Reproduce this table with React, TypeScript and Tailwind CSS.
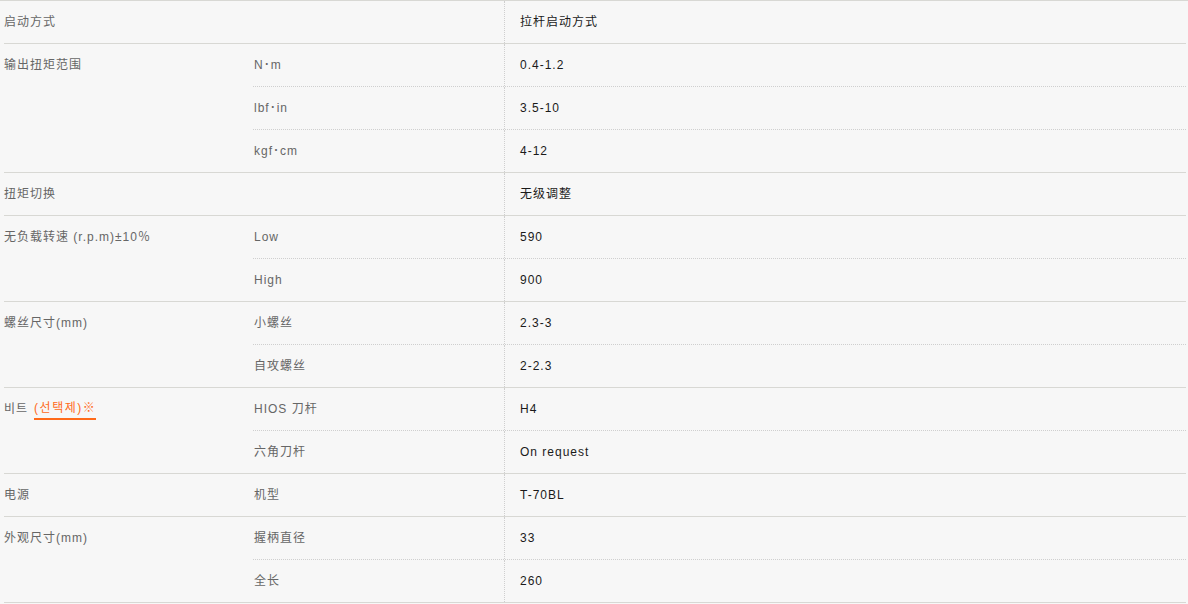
const groups: { label: React.ReactNode; rows: [string, string][] }[] = [
  { label: "启动方式", rows: [["", "拉杆启动方式"]] },
  {
    label: "输出扭矩范围",
    rows: [
      ["N･m", "0.4-1.2"],
      ["lbf･in", "3.5-10"],
      ["kgf･cm", "4-12"],
    ],
  },
  { label: "扭矩切换", rows: [["", "无级调整"]] },
  {
    label: "无负载转速 (r.p.m)±10％",
    rows: [
      ["Low", "590"],
      ["High", "900"],
    ],
  },
  {
    label: "螺丝尺寸(mm)",
    rows: [
      ["小螺丝", "2.3-3"],
      ["自攻螺丝", "2-2.3"],
    ],
  },
  {
    label: (
      <>
        비트
        <a href="#" className="ml-[6px] text-[#ff6a1a] border-b-2 border-[#ff6a1a] pb-px tracking-[1.5px]">
          (선택제)※
        </a>
      </>
    ),
    rows: [
      ["HIOS 刀杆", "H4"],
      ["六角刀杆", "On request"],
    ],
  },
  { label: "电源", rows: [["机型", "T-70BL"]] },
  {
    label: "外观尺寸(mm)",
    rows: [
      ["握柄直径", "33"],
      ["全长", "260"],
    ],
  },
];

export default function App() {
  return (
    <div
      className="min-h-screen bg-[#f7f7f7] text-[12px] tracking-[1px]"
      style={{ fontFamily: '"Liberation Sans", Arial, "Noto Sans CJK SC", sans-serif' }}
    >
      <div className="border-t border-[#d8d8d4] pl-1 pr-[2px]">
        {groups.map((g, i) => (
          <div key={i} className="flex border-b border-[#d8d8d4]">
            <div className="w-[249px] shrink-0 h-[42px] flex items-center text-[#666]">{g.label}</div>
            <div className="flex-1 flex flex-col">
              {g.rows.map(([unit, value], j) => (
                <div
                  key={j}
                  className={`flex h-[42px] ${j < g.rows.length - 1 ? "border-b border-dotted border-[#cfcfcf] h-[43px]" : ""}`}
                >
                  <div className="w-[251px] shrink-0 flex items-center pl-px text-[#666]">{unit}</div>
                  <div className="flex-1 flex items-center pl-[15px] border-l border-dotted border-[#cfcfcf] text-[#1a1a1a]">
                    {value}
                  </div>
                </div>
              ))}
            </div>
          </div>
        ))}
      </div>
    </div>
  );
}
